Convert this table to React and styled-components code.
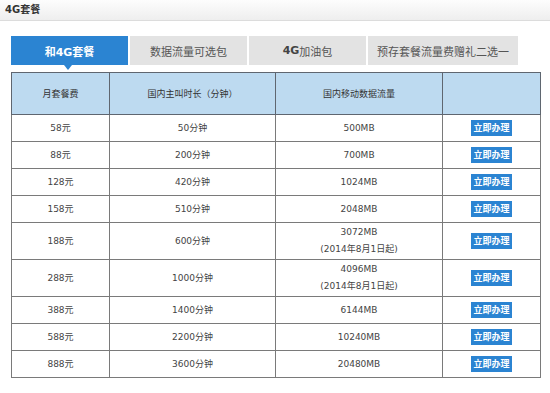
import React from 'react';
import styled, { createGlobalStyle } from 'styled-components';

const GlobalStyle = createGlobalStyle`
  body {
    margin: 0;
    background: #fff;
    font-family: "DejaVu Sans", "Noto Sans CJK SC", sans-serif;
    color: #444;
  }
`;

const tabs = [
  { label: '和4G套餐', width: 117, active: true },
  { label: '数据流量可选包', width: 117 },
  { label: '4G加油包', width: 117, boldLatin: true },
  { label: '预存套餐流量费赠礼二选一', width: 150 },
];

const plans = [
  { fee: '58元', mins: '50分钟', data: '500MB' },
  { fee: '88元', mins: '200分钟', data: '700MB' },
  { fee: '128元', mins: '420分钟', data: '1024MB' },
  { fee: '158元', mins: '510分钟', data: '2048MB' },
  { fee: '188元', mins: '600分钟', data: '3072MB', note: '(2014年8月1日起)' },
  { fee: '288元', mins: '1000分钟', data: '4096MB', note: '(2014年8月1日起)' },
  { fee: '388元', mins: '1400分钟', data: '6144MB' },
  { fee: '588元', mins: '2200分钟', data: '10240MB' },
  { fee: '888元', mins: '3600分钟', data: '20480MB' },
];

const App = () => {
  return (
    <Page>
      <GlobalStyle />
      <TitleBar>4G套餐</TitleBar>
      <Content>
        <Tabs>
          {tabs.map((tab, index) => (
            <Tab key={index} width={tab.width} active={tab.active}>
              {tab.boldLatin ? (
                <>
                  <b>4G</b>加油包
                </>
              ) : (
                tab.label
              )}
            </Tab>
          ))}
        </Tabs>

        <Table>
          <colgroup>
            <col style={{ width: 98 }} />
            <col style={{ width: 166 }} />
            <col style={{ width: 167 }} />
            <col style={{ width: 98 }} />
          </colgroup>
          <thead>
            <tr>
              <Th>月套餐费</Th>
              <Th>国内主叫时长（分钟）</Th>
              <Th>国内移动数据流量</Th>
              <Th></Th>
            </tr>
          </thead>
          <tbody>
            {plans.map((plan, index) => (
              <tr key={index}>
                <Td tall={!!plan.note}>{plan.fee}</Td>
                <Td tall={!!plan.note}>{plan.mins}</Td>
                <Td tall={!!plan.note}>
                  {plan.data}
                  {plan.note && <Note>{plan.note}</Note>}
                </Td>
                <Td tall={!!plan.note}>
                  <Button>立即办理</Button>
                </Td>
              </tr>
            ))}
          </tbody>
        </Table>
      </Content>
    </Page>
  );
};

export default App;

const Page = styled.div`
  width: 550px;
  height: 393px;
  overflow: hidden;
  background: #fff;
`;

const TitleBar = styled.div`
  height: 20px;
  line-height: 20px;
  padding-left: 5px;
  font-size: 10px;
  font-weight: bold;
  color: #333;
  background: linear-gradient(#fdfdfd, #eeeeee);
  border-bottom: 1px solid #dcdcdc;
`;

const Content = styled.div`
  padding: 15px 0 0 11px;
`;

const Tabs = styled.div`
  display: flex;
  gap: 2px;
  height: 29px;
  margin-bottom: 7px;
`;

const Tab = styled.div`
  position: relative;
  width: ${(p) => p.width}px;
  display: flex;
  align-items: center;
  justify-content: center;
  font-size: 11px;
  font-weight: ${(p) => (p.active ? 'bold' : 'normal')};
  color: ${(p) => (p.active ? '#fff' : '#555')};
  background: ${(p) => (p.active ? '#2b84d2' : '#e3e3e3')};

  b {
    color: #444;
  }

  &::after {
    content: '';
    display: ${(p) => (p.active ? 'block' : 'none')};
    position: absolute;
    left: 50%;
    bottom: -5px;
    margin-left: -6px;
    border-left: 4px solid transparent;
    border-right: 4px solid transparent;
    border-top: 5px solid #2b84d2;
  }
`;

const Table = styled.table`
  width: 529px;
  table-layout: fixed;
  border-collapse: collapse;
  border: 1px solid #666;
`;

const Th = styled.th`
  height: 41px;
  padding: 0;
  font-size: 9px;
  font-weight: normal;
  color: #333;
  background: #bddaf0;
  border: 1px solid #5f6670;
  text-align: center;
`;

const Td = styled.td`
  height: ${(p) => (p.tall ? 36 : 26)}px;
  padding: 0;
  font-size: 9px;
  color: #444;
  border: 1px solid #7a7a7a;
  text-align: center;
  line-height: 17px;
`;

const Note = styled.div`
  line-height: 17px;
`;

const Button = styled.span`
  display: inline-block;
  padding: 0 2px;
  height: 16px;
  line-height: 16px;
  font-size: 9px;
  font-weight: bold;
  color: #fff;
  background: #2b84d2;
  vertical-align: middle;
  cursor: pointer;
`;
